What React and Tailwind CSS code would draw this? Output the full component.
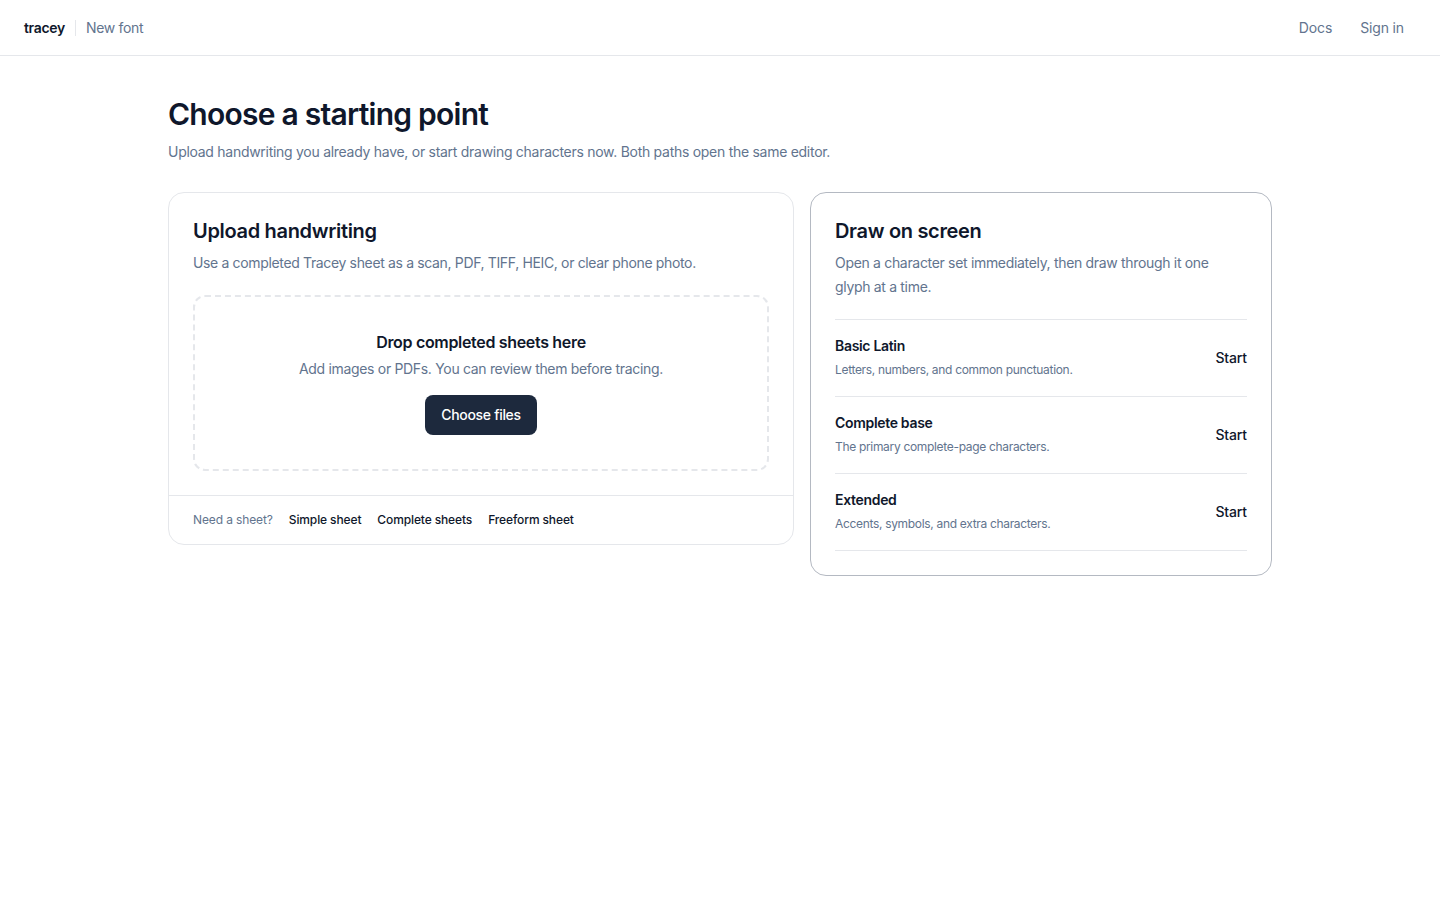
const rows = [
  { title: 'Basic Latin', desc: 'Letters, numbers, and common punctuation.' },
  { title: 'Complete base', desc: 'The primary complete-page characters.' },
  { title: 'Extended', desc: 'Accents, symbols, and extra characters.' },
];

const App = () => {
  return (
    <div className="min-h-screen bg-white text-slate-900 tracking-[-0.02em]" style={{ fontFamily: 'Inter, "Noto Sans", sans-serif' }}>
      <header className="flex h-14 items-center justify-between border-b border-gray-200 px-6">
        <div className="flex items-center gap-2.5 text-sm">
          <span className="font-semibold text-slate-900">tracey</span>
          <span className="h-4 w-px bg-gray-200" />
          <span className="text-slate-500">New font</span>
        </div>
        <nav className="flex items-center gap-1 text-sm tracking-[-0.01em] text-slate-500">
          <a className="px-3 py-1.5">Docs</a>
          <a className="px-3 py-1.5">Sign in</a>
        </nav>
      </header>

      <main className="mx-auto max-w-6xl px-6 pt-10">
        <h1 className="text-3xl leading-9 font-semibold tracking-[-0.025em] text-slate-900">Choose a starting point</h1>
        <p className="mt-2.5 text-sm tracking-[-0.02em] text-slate-500">
          Upload handwriting you already have, or start drawing characters now. Both paths open the same editor.
        </p>

        <div className="mt-[30px] grid grid-cols-[626px_1fr] items-start gap-4">
          <section className="rounded-2xl border border-gray-200 bg-white">
            <div className="px-6 pt-6 pb-6">
              <h2 className="text-xl leading-7 font-semibold text-slate-900">Upload handwriting</h2>
              <p className="mt-1.5 text-sm leading-6 tracking-[-0.025em] text-slate-500">
                Use a completed Tracey sheet as a scan, PDF, TIFF, HEIC, or clear phone photo.
              </p>
              <div className="mt-5 flex flex-col items-center rounded-xl border-2 border-dashed border-gray-200 pt-[33px] pb-[34px] text-center">
                <p className="text-base leading-6 font-semibold text-slate-900">Drop completed sheets here</p>
                <p className="mt-[5px] text-sm text-slate-500">Add images or PDFs. You can review them before tracing.</p>
                <button className="mt-4 h-10 rounded-lg bg-slate-800 px-4 text-sm font-medium text-white">Choose files</button>
              </div>
            </div>
            <div className="flex items-center gap-4 border-t border-gray-200 px-6 py-4 text-xs tracking-[-0.01em]">
              <span className="text-slate-500">Need a sheet?</span>
              <a className="font-medium text-slate-900">Simple sheet</a>
              <a className="font-medium text-slate-900">Complete sheets</a>
              <a className="font-medium text-slate-900">Freeform sheet</a>
            </div>
          </section>

          <section className="rounded-2xl border border-[#b4b9c2] bg-white px-6 pt-6 pb-6">
            <h2 className="text-xl leading-7 font-semibold text-slate-900">Draw on screen</h2>
            <p className="mt-1.5 text-sm leading-6 text-slate-500">
              Open a character set immediately, then draw through it one glyph at a time.
            </p>
            <ul className="mt-5 border-t border-gray-200">
              {rows.map((row) => (
                <li key={row.title} className="flex items-center justify-between border-b border-gray-200 py-4">
                  <div>
                    <p className="text-sm leading-5 font-semibold text-slate-900">{row.title}</p>
                    <p className="mt-1 text-xs leading-5 text-slate-500">{row.desc}</p>
                  </div>
                  <a className="text-sm font-medium tracking-[-0.01em] text-slate-900">Start</a>
                </li>
              ))}
            </ul>
          </section>
        </div>
      </main>
    </div>
  );
};

export default App;
